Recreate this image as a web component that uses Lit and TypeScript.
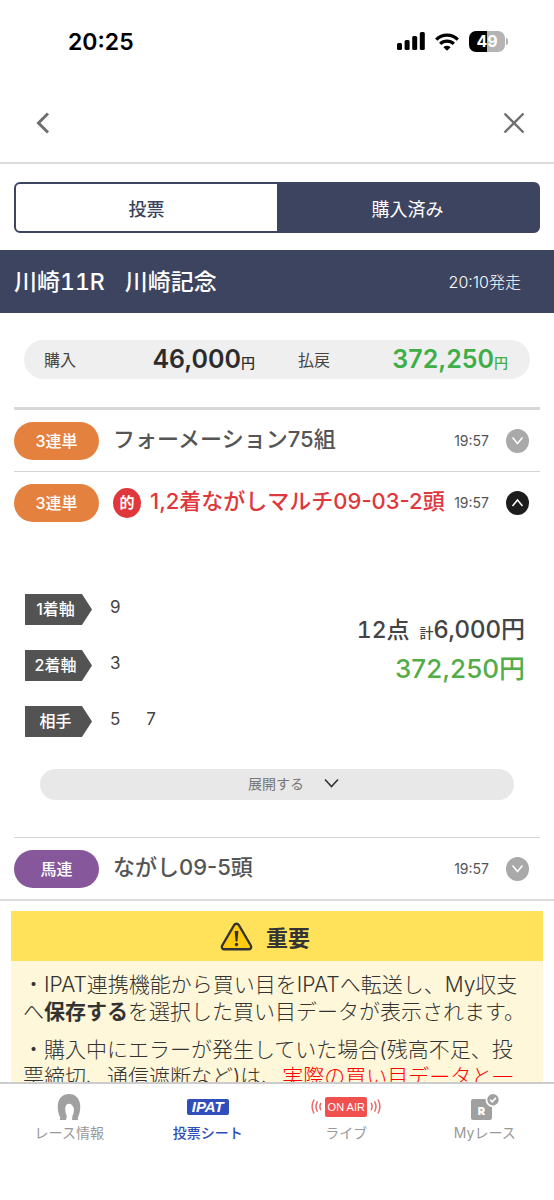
import { LitElement, html, css, svg, nothing } from "lit";
import { customElement, property } from "lit/decorators.js";
import { classMap } from "lit/directives/class-map.js";

const base = css`
  *, *::before, *::after { box-sizing: border-box; }
  button { font: inherit; color: inherit; background: none; border: 0; padding: 0; margin: 0; cursor: pointer; }
  a { color: inherit; text-decoration: none; }
  svg { display: block; }
  p, h1, h2, ul, dl, dd { margin: 0; padding: 0; }
`;

@customElement("status-bar")
class StatusBar extends LitElement {
  static styles = [base, css`
    :host { display: flex; align-items: center; justify-content: space-between; height: 83px; padding: 0 46px 0 68px; color: #000; }
    .time { font-size: 23px; font-weight: 600; line-height: 28px; }
    .icons { display: flex; align-items: center; gap: 10px; }
    .battery { display: flex; align-items: center; gap: 1px; }
    .cell { width: 36px; height: 21px; border-radius: 7px; background: linear-gradient(90deg, #000 50%, #b4b4b4 50%); color: #fff; font-size: 16px; font-weight: 700; line-height: 21px; text-align: center; }
    .tip { width: 2px; height: 7px; border-radius: 0 2px 2px 0; background: #b4b4b4; }
  `];
  render() {
    return html`
      <span class="time">20:25</span>
      <div class="icons">
        <svg width="28" height="19" viewBox="0 0 28 19" aria-label="電波">
          <rect x="0" y="11" width="5" height="7" rx="1.5"/><rect x="7.6" y="8" width="5" height="10" rx="1.5"/>
          <rect x="15.2" y="4" width="5" height="14" rx="1.5"/><rect x="22.8" y="0" width="5" height="18" rx="1.5"/>
        </svg>
        <svg width="24" height="18" viewBox="0 0 24 18" aria-label="Wi-Fi">
          <g fill="none" stroke="#000" stroke-width="3.2"><path d="M1.2 6.6a15.4 15.4 0 0 1 21.6 0"/><path d="M5.2 10.8a9.8 9.8 0 0 1 13.6 0"/></g>
          <path d="M12 17.8 8.4 14.2a5.2 5.2 0 0 1 7.2 0z"/>
        </svg>
        <div class="battery"><div class="cell">49</div><div class="tip"></div></div>
      </div>`;
  }
}

@customElement("bet-row")
class BetRow extends LitElement {
  @property() kind = "";
  @property() tone = "orange";
  @property() name = "";
  @property() time = "";
  @property({ type: Boolean }) hit = false;
  @property({ type: Boolean }) open = false;
  static styles = [base, css`
    :host { display: flex; align-items: center; height: 61px; padding-right: 11px; color: #555; }
    .kind { flex: none; width: 85px; height: 38px; border-radius: 19px; color: #fff; font-size: 16px; font-weight: 500; line-height: 38px; text-align: center; }
    .orange { background: #e5813e; }
    .purple { background: #87579b; }
    .name { flex: 1; display: flex; align-items: center; gap: 9px; margin-left: 14px; padding-bottom: 4px; font-size: 22px; font-weight: 500; line-height: 30px; white-space: nowrap; }
    .hit { color: #e0373c; }
    .mark { width: 28px; height: 30px; margin-top: 4px; border-radius: 50%; background: #e0373c; color: #fff; font-size: 15px; font-weight: 700; line-height: 30px; text-align: center; }
    .time { font-size: 14px; line-height: 20px; }
    .toggle { flex: none; display: grid; place-items: center; width: 23px; height: 24px; margin-left: 17px; border-radius: 50%; background: #a9a9a9; }
    .toggle.open { background: #1d1d1d; }
  `];
  render() {
    return html`
      <span class="kind ${this.tone}">${this.kind}</span>
      <span class=${classMap({ name: true, hit: this.hit })}>
        ${this.hit ? html`<span class="mark">的</span>` : nothing}<span>${this.name}</span>
      </span>
      <span class="time">${this.time}</span>
      <button class=${classMap({ toggle: true, open: this.open })} aria-label="詳細" aria-expanded=${this.open}>
        <svg width="13" height="9" viewBox="0 0 13 9" fill="none" stroke="#fff" stroke-width="1.5"><path d=${this.open ? "M1.5 8 6.5 2 11.5 8" : "M1.5 1.5 6.5 7.5 11.5 1.5"}/></svg>
      </button>`;
  }
}

const horseshoe = svg`<svg width="24" height="26" viewBox="0 0 24 26"><path fill="#a0a0a0" d="M3 26 3.200 23.400 2.200 21.200C1 18 .6 14.500.8 11.500 1.300 4.500 5.500 0 12 0s10.700 4.500 11.200 11.500c.2 3-.2 6.500-1.400 9.700l-1 2.200.2 2.600h-6l.4-3.800c1.300-3 1.700-5.700 1.500-8C15.400 11.200 14.200 9.800 12 9.800s-3.400 1.400-3.700 4.400c-.2 2.300.2 5 1.500 8L9 26z"/></svg>`;
const waves = svg`<svg width="11" height="15" viewBox="0 0 11 15" fill="none" stroke="#e76b69" stroke-width="1.500" stroke-linecap="round"><path d="M2.800 1Q-.6 7.500 2.800 14M6.200 2.800Q3.800 7.500 6.200 12.200M9.700 4.300Q8.100 7.500 9.700 10.700"/></svg>`;
const myRace = svg`<svg width="28" height="26" viewBox="0 0 28 26"><rect x="0" y="5" width="21" height="21" rx="2" fill="#a0a0a0"/><circle cx="22" cy="5.700" r="7.400" fill="#fff"/><circle cx="22" cy="5.700" r="5.700" fill="#a0a0a0"/><path d="M19.200 5.700 21.200 7.800 24.900 3.900" fill="none" stroke="#fff" stroke-width="1.600"/><text x="10.500" y="20.500" text-anchor="middle" font-family="Inter, sans-serif" font-size="11" font-weight="900" fill="#fff">R</text></svg>`;

@customElement("app-root")
class AppRoot extends LitElement {
  static styles = [base, css`
    :host { display: flex; flex-direction: column; height: 100vh; overflow: hidden; background: #fff; color: #444; font-family: Inter, "Noto Sans CJK JP", sans-serif; }
    .head { flex: none; display: flex; align-items: center; justify-content: space-between; height: 81px; padding: 0 29px 0 36px; border-bottom: 2px solid #dcdcdc; }
    main { flex: 1; min-height: 0; overflow: hidden; }
    .tabs { display: grid; grid-template-columns: 1fr 1fr; height: 51px; margin: 18px 14px 17px; border: 2px solid #3d445f; border-radius: 6px; background: linear-gradient(90deg, #fff 50%, #3d445f 50%); color: #3d445f; font-size: 18px; font-weight: 500; }
    .tabs .on { color: #fff; font-weight: 400; }
    .race { display: flex; align-items: center; justify-content: space-between; height: 63px; padding: 0 33px 0 14px; background: #3d445f; color: #fff; }
    .race h1 { display: flex; gap: 20px; font-size: 23px; font-weight: 500; line-height: 32px; font-feature-settings: "tnum"; }
    .start { font-size: 16px; font-weight: 300; line-height: 24px; }
    .sum { display: grid; grid-template-columns: 50px 161fr 77px 176fr; align-items: center; height: 39px; margin: 27px 24px 28px; padding: 0 22px 0 20px; border-radius: 20px; background: #efefef; font-size: 16px; line-height: 36px; }
    .sum dd { color: #2c2c2c; font-size: 25px; font-weight: 600; line-height: 35px; text-align: right; }
    .sum dt:last-of-type { padding-left: 43px; white-space: nowrap; }
    .sum dd.pay { color: #3eae49; }
    .small { font-size: 14px; font-weight: 500; }
    .sum .small { line-height: 20px; }
    .list { margin: 0 14px; border-top: 3px solid #d8d8d8; list-style: none; }
    .list > li + li { border-top: 1px solid #d4d4d4; }
    .detail { display: grid; grid-template-columns: auto 1fr; align-items: center; padding: 61px 15px 32px 11px; }
    .axes { display: grid; row-gap: 25px; }
    .axis { display: grid; grid-template-columns: 67px auto; column-gap: 18px; }
    .axis dt { height: 31px; padding-right: 6px; background: #535353; clip-path: polygon(0 0, 85% 0, 100% 50%, 85% 100%, 0 100%); color: #fff; font-size: 16px; font-weight: 500; line-height: 30px; text-align: center; }
    .axis dd { display: flex; gap: 26px; font-size: 17px; line-height: 26px; }
    .total { padding-bottom: 32px; color: #444; font-size: 24px; font-weight: 500; line-height: 36px; text-align: right; }
    .total .count { margin-right: 10px; font-size: 23px; font-feature-settings: "tnum"; }
    .pay { color: #53ad47; }
    .total .pay { font-size: 26px; }
    .expand { display: flex; align-items: center; justify-content: center; gap: 20px; width: calc(100% - 52px); height: 31px; margin: 0 26px 37px; padding: 0 0 4px 33px; border-radius: 16px; background: #e8e8e8; color: #777; font-size: 14px; }
    .rule { border-top: 2px solid #dcdcdc; }
    .note { margin: 10px 11px 0; background: #fff7d9; color: #333; }
    .note h2 { display: flex; align-items: center; justify-content: center; gap: 13px; height: 50px; padding-right: 24px; background: #ffe15a; font-size: 22px; font-weight: 700; }
    .note div { padding: 10px 8px 0 12px; }
    .note p { margin-bottom: 11px; font-size: 21px; font-weight: 300; line-height: 27px; white-space: nowrap; }
    .note b { font-weight: 700; }
    .red { color: #f00; }
    nav { flex: none; display: grid; grid-template-columns: repeat(4, 1fr); height: 118px; border-top: 2px solid #ccc; background: #fff; color: #999; }
    nav a { display: flex; flex-direction: column; align-items: center; padding-top: 9px; font-size: 14px; line-height: 20px; gap: 3px; }
    nav .on { color: #2f4dbb; font-weight: 500; }
    .icon { display: flex; align-items: center; gap: 3px; height: 27px; }
    .flip { transform: scaleX(-1); }
    .ipat { width: 42px; height: 16px; border-radius: 2px; background: #2f4dbb; color: #fff; font: italic 700 15px/16px "Liberation Sans", sans-serif; text-align: center; }
    .air { width: 42px; height: 20px; border-radius: 2px; background: #f0504e; color: #fff; font: 11px/21px "Liberation Sans", sans-serif; text-align: center; white-space: nowrap; }
  `];
  axis(label: string, nums: number[]) {
    return html`<div class="axis"><dt>${label}</dt><dd>${nums.map((n) => html`<span>${n}</span>`)}</dd></div>`;
  }
  render() {
    return html`
      <status-bar></status-bar>
      <header class="head">
        <button aria-label="戻る"><svg width="14" height="22" viewBox="0 0 14 22" fill="none" stroke="#6f6f6f" stroke-width="3"><path d="M12 1.500 2.500 11 12 20.500"/></svg></button>
        <button aria-label="閉じる"><svg width="22" height="22" viewBox="0 0 22 22" fill="none" stroke="#6f6f6f" stroke-width="2.400"><path d="M1.500 1.500 20.500 20.500M20.500 1.500 1.500 20.500"/></svg></button>
      </header>
      <main>
        <div class="tabs"><button>投票</button><button class="on">購入済み</button></div>
        <div class="race"><h1><span>川崎11R</span><span>川崎記念</span></h1><span class="start">20:10発走</span></div>
        <dl class="sum">
          <dt>購入</dt><dd>46,000<span class="small">円</span></dd>
          <dt>払戻</dt><dd class="pay">372,250<span class="small">円</span></dd>
        </dl>
        <ul class="list">
          <li><bet-row kind="3連単" name="フォーメーション75組" time="19:57"></bet-row></li>
          <li>
            <bet-row kind="3連単" name="1,2着ながしマルチ09-03-2頭" time="19:57" hit open></bet-row>
            <div class="detail">
              <dl class="axes">${this.axis("1着軸", [9])}${this.axis("2着軸", [3])}${this.axis("相手", [5, 7])}</dl>
              <div class="total">
                <p><span class="count">12点</span><span class="small">計</span>6,000円</p>
                <p class="pay">372,250円</p>
              </div>
            </div>
            <button class="expand">展開する<svg width="15" height="10" viewBox="0 0 15 10" fill="none" stroke="#333" stroke-width="1.600"><path d="M1 1.500 7.500 8.500 14 1.500"/></svg></button>
          </li>
          <li><bet-row kind="馬連" tone="purple" name="ながし09-5頭" time="19:57"></bet-row></li>
        </ul>
        <div class="rule"></div>
        <section class="note">
          <h2><svg width="33" height="29" viewBox="0 0 33 29"><path d="M14.200 3 2.200 23.500a2.500 2.500 0 0 0 2.200 3.800h24.200a2.500 2.500 0 0 0 2.200-3.800L18.800 3a2.700 2.700 0 0 0-4.600 0z" fill="#ffcc12" stroke="#333" stroke-width="2.400"/><path d="M14.600 9h3.800l-1 10.500h-1.800z" fill="#333"/><circle cx="16.500" cy="22.500" r="1.700" fill="#333"/></svg>重要</h2>
          <div>
            <p>・IPAT連携機能から買い目をIPATへ転送し、My収支<br>へ<b>保存する</b>を選択した買い目データが表示されます。</p>
            <p>・購入中にエラーが発生していた場合(残高不足、投<br>票締切、通信遮断など)は、<span class="red">実際の買い目データと一</span></p>
          </div>
        </section>
      </main>
      <nav>
        <a href="#race"><span class="icon">${horseshoe}</span>レース情報</a>
        <a href="#sheet" class="on"><span class="icon"><span class="ipat">IPAT</span></span>投票シート</a>
        <a href="#live"><span class="icon">${waves}<span class="air">ON AIR</span><span class="flip">${waves}</span></span>ライブ</a>
        <a href="#my"><span class="icon">${myRace}</span>Myレース</a>
      </nav>`;
  }
}
